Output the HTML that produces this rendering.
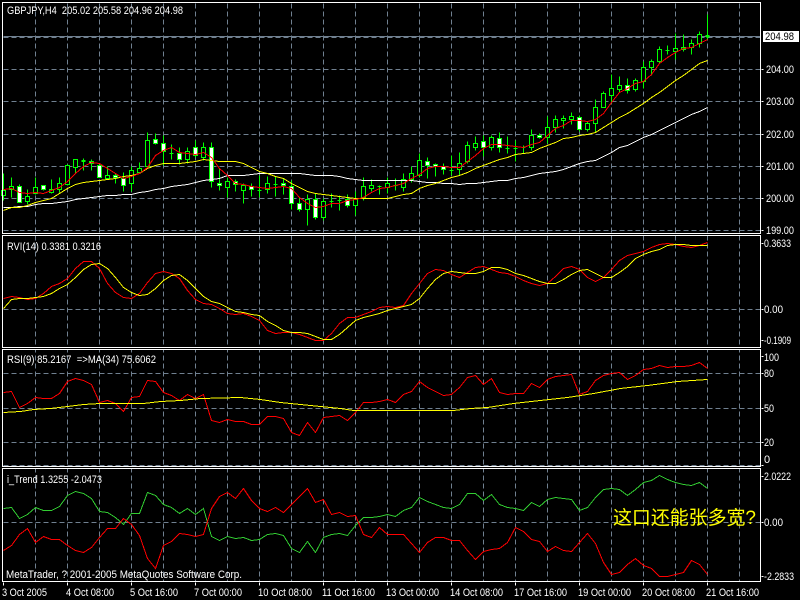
<!DOCTYPE html>
<html>
<head>
<meta charset="utf-8">
<style>
html,body{margin:0;padding:0;background:#000;width:800px;height:600px;overflow:hidden}
svg{display:block}
text{font-family:"Liberation Sans",sans-serif;font-size:11px;fill:#fff;white-space:pre}
.l{fill:none;stroke-width:1;shape-rendering:crispEdges}
</style>
</head>
<body>
<svg width="800" height="600" viewBox="0 0 800 600" xmlns="http://www.w3.org/2000/svg">
<rect width="800" height="600" fill="#000"/>
<g transform="translate(.5 .5)">
<!-- grid -->
<path class="l" stroke="#708090" stroke-dasharray="5 3" d="M35 3V581M67 3V581M99 3V581M131 3V581M163 3V581M195 3V581M227 3V581M259 3V581M291 3V581M323 3V581M355 3V581M387 3V581M419 3V581M451 3V581M483 3V581M515 3V581M547 3V581M579 3V581M611 3V581M643 3V581M675 3V581M707 3V581M739 3V581"/>
<path class="l" stroke="#000" d="M3 234H760M3 348H760M3 467H760"/>
<path class="l" stroke="#708090" stroke-dasharray="5 3" d="M3 37H760M3 69H760M3 101H760M3 134H760M3 166H760M3 198H760M3 230H760M3 309H760M3 373H760M3 408H760M3 442H760M3 465H760M3 522H760"/>
<path class="l" stroke="#708090" d="M3 36H760"/>

<!-- wicks -->
<path class="l" stroke="#0f0" d="M3 173V200M11 177V197M19 184V202M27 189V204M35 177V194M43 185V190M51 179V193M59 177V192M67 164V185M75 159V173M83 158V170M91 159V170M99 163V177M107 166V179M115 173V183M123 172V191M131 166V191M139 162V173M147 132V167M155 133V144M163 135V165M171 144V159M179 147V164M187 147V163M195 140V157M203 142V160M211 142V187M219 168V190M227 177V197M235 179V191M243 183V203M251 183V196M259 175V197M267 176V193M275 176V196M283 178V194M291 180V209M299 197V211M307 194V225M315 193V219M323 198V220M331 193V207M339 195V210M347 194V207M355 191V215M363 177V200M371 179V191M379 185V194M387 177V193M395 178V190M403 173V191M411 166V182M419 153V177M427 157V178M435 163V176M443 163V174M451 155V175M459 152V175M467 141V163M475 136V150M483 135V156M491 135V150M499 132V152M507 136V153M515 140V161M523 145V153M531 129V150M539 133V138M547 116V143M555 115V132M563 115V128M571 112V124M579 115V131M587 121V131M595 99V132M603 91V107M611 74V103M619 76V92M627 78V93M635 78V91M643 61V88M651 59V75M659 46V63M667 45V54M675 33V59M683 34V51M691 39V54M699 31V47M707 14V39"/>
<!-- doji bars -->
<path class="l" stroke="#0f0" d="M81 160H85M81 161H85M169 153H173M257 190H261M273 184H277M329 201H333M337 200H341M377 186H381M393 185H397M449 170H453M505 148H509M513 148H517M521 147H525M665 50H669M705 35H709M705 36H709M706 37H708"/>
<!-- bullish bodies -->
<path class="l" stroke="#0f0" fill="#000" style="fill:#000" d="M1 190h4v5h-4zM9 186h4v3h-4zM25 196h4v5h-4zM33 187h4v6h-4zM49 189h4v3h-4zM57 183h4v6h-4zM65 165h4v19h-4zM73 159h4v8h-4zM105 175h4v3h-4zM129 170h4v13h-4zM137 168h4v4h-4zM145 140h4v26h-4zM185 151h4v8h-4zM201 147h4v10h-4zM225 181h4v6h-4zM241 185h4v5h-4zM265 183h4v6h-4zM305 199h4v10h-4zM321 201h4v16h-4zM353 199h4v6h-4zM361 186h4v11h-4zM369 185h4v3h-4zM385 183h4v4h-4zM401 179h4v8h-4zM409 173h4v6h-4zM417 160h4v15h-4zM457 163h4v6h-4zM465 145h4v16h-4zM473 143h4v4h-4zM489 137h4v10h-4zM529 135h4v12h-4zM545 127h4v10h-4zM553 119h4v8h-4zM561 118h4v2h-4zM569 116h4v3h-4zM585 123h4v6h-4zM593 107h4v16h-4zM601 93h4v14h-4zM609 88h4v7h-4zM617 85h4v4h-4zM633 80h4v9h-4zM641 67h4v14h-4zM649 61h4v6h-4zM657 49h4v12h-4zM673 48h4v3h-4zM681 47h4v2h-4zM689 43h4v4h-4zM697 34h4v9h-4z"/>
<!-- bearish bodies -->
<path class="l" stroke="#0f0" fill="#fff" style="fill:#fff" d="M17 186h4v16h-4zM41 185h4v4h-4zM89 161h4v2h-4zM97 165h4v12h-4zM113 175h4v2h-4zM121 178h4v7h-4zM153 139h4v4h-4zM161 143h4v8h-4zM177 153h4v6h-4zM193 147h4v8h-4zM209 147h4v34h-4zM217 183h4v2h-4zM233 181h4v3h-4zM249 186h4v3h-4zM281 183h4v2h-4zM289 186h4v17h-4zM297 203h4v6h-4zM313 199h4v18h-4zM345 199h4v6h-4zM425 161h4v4h-4zM433 164h4v2h-4zM441 166h4v3h-4zM481 141h4v6h-4zM497 138h4v9h-4zM537 135h4v2h-4zM577 117h4v12h-4zM625 85h4v5h-4z"/>

<!-- main chart MAs -->
<polyline class="l" stroke="#fff" points="3,207 11,207 19,206 27,206 35,204 43,203 51,203 59,202 67,201 75,199 83,198 91,197 99,196 107,195 115,195 123,194 131,194 139,192 147,191 155,189 163,188 171,186 179,185 187,184 195,182 203,180 211,179 219,178 227,175 235,175 243,175 251,174 259,173 267,173 275,173 283,173 291,173 299,173 307,174 315,175 323,175 331,175 339,176 347,178 355,179 363,180 371,180 379,180 387,180 395,180 403,180 411,180 419,181 427,182 435,182 443,183 451,183 459,184 467,183 475,183 483,182 491,181 499,180 507,180 515,178 523,177 531,175 539,173 547,172 555,171 563,169 571,166 579,163 587,161 595,160 603,156 611,152 619,147 627,145 635,141 643,137 651,134 659,130 667,126 675,122 683,118 691,114 699,111 707,107"/>
<polyline class="l" stroke="#ff0" points="3,210 11,207 19,207 27,205 35,202 43,200 51,198 59,193 67,188 75,184 83,182 91,181 99,180 107,179 115,178 123,176 131,175 139,173 147,168 155,165 163,163 171,163 179,163 187,162 195,161 203,159 211,160 219,161 227,161 235,161 243,163 251,167 259,171 267,173 275,176 283,178 291,183 299,187 307,191 315,193 323,194 331,195 339,196 347,197 355,198 363,198 371,198 379,198 387,198 395,196 403,194 411,193 419,188 427,185 435,183 443,180 451,177 459,175 467,172 475,168 483,165 491,162 499,159 507,157 515,154 523,153 531,152 539,148 547,145 555,142 563,138 571,137 579,135 587,134 595,132 603,127 611,122 619,117 627,113 635,108 643,103 651,97 659,92 667,86 675,80 683,75 691,69 699,63 707,60"/>
<polyline class="l" stroke="#f00" points="3,189 11,188 19,192 27,193 35,192 43,193 51,190 59,187 67,181 75,173 83,166 91,162 99,163 107,168 115,173 123,178 131,176 139,173 147,167 155,155 163,150 171,147 179,152 187,153 195,154 203,152 211,157 219,168 227,175 235,183 243,184 251,186 259,187 267,188 275,187 283,186 291,188 299,197 307,203 315,207 323,206 331,203 339,203 347,200 355,199 363,197 371,192 379,188 387,187 395,185 403,183 411,178 419,174 427,168 435,166 443,166 451,167 459,167 467,161 475,155 483,148 491,144 499,144 507,145 515,146 523,147 531,144 539,142 547,135 555,128 563,125 571,120 579,120 587,121 595,119 603,113 611,102 619,92 627,88 635,83 643,81 651,74 659,63 667,57 675,52 683,48 691,47 699,43 707,39"/>

<!-- RVI -->
<polyline class="l" stroke="#f00" points="3,298 11,296 19,297 27,299 35,298 43,293 51,286 59,283 67,278 75,268 83,261 91,261 99,268 107,283 115,292 123,297 131,298 139,293 147,282 155,273 163,271 171,273 179,278 187,290 195,299 203,303 211,304 219,308 227,313 235,314 243,313 251,316 259,320 267,330 275,333 283,332 291,332 299,334 307,337 315,340 323,340 331,333 339,323 347,317 355,317 363,314 371,311 379,307 387,306 395,307 403,305 411,293 419,283 427,273 435,269 443,270 451,274 459,277 467,272 475,267 483,266 491,269 499,272 507,273 515,276 523,280 531,283 539,285 547,283 555,276 563,268 571,266 579,269 587,277 595,281 603,277 611,269 619,260 627,255 635,253 643,251 651,247 659,244 667,243 675,244 683,246 691,247 699,245 707,242"/>
<polyline class="l" stroke="#ff0" points="3,308 11,299 19,298 27,298 35,297 43,296 51,293 59,288 67,284 75,277 83,269 91,264 99,263 107,268 115,277 123,287 131,292 139,295 147,294 155,288 163,280 171,275 179,274 187,280 195,288 203,296 211,301 219,303 227,307 235,311 243,312 251,314 259,315 267,321 275,325 283,330 291,332 299,332 307,333 315,336 323,339 331,339 339,334 347,327 355,320 363,317 371,315 379,313 387,310 395,308 403,306 411,304 419,298 427,288 435,279 443,273 451,271 459,272 467,273 475,273 483,271 491,267 499,267 507,269 515,273 523,275 531,278 539,281 547,283 555,283 563,279 571,274 579,270 587,269 595,273 603,277 611,277 619,272 627,266 635,258 643,254 651,251 659,249 667,245 675,244 683,244 691,245 699,245 707,245"/>

<!-- RSI -->
<polyline class="l" stroke="#f00" points="3,392 11,391 19,407 27,403 35,397 43,398 51,398 59,393 67,381 75,378 83,380 91,384 99,402 107,400 115,403 123,411 131,397 139,396 147,380 155,381 163,392 171,395 179,400 187,394 195,398 203,394 211,420 219,422 227,419 235,421 243,421 251,424 259,424 267,416 275,416 283,418 291,432 299,435 307,422 315,432 323,417 331,416 339,415 347,420 355,412 363,402 371,402 379,401 387,399 395,402 403,394 411,391 419,381 427,387 435,391 443,395 451,394 459,387 467,377 475,375 483,384 491,378 499,392 507,394 515,393 523,393 531,383 539,387 547,379 555,376 563,375 571,374 579,394 587,391 595,380 603,375 611,373 619,372 627,379 635,375 643,369 651,368 659,365 667,367 675,366 683,366 691,365 699,362 707,368"/>
<polyline class="l" stroke="#ff0" points="3,412 20,411 33,409 50,408 67,406 83,404 100,403 143,403 160,401 180,400 200,398 240,397 260,399 280,402 300,404 320,406 340,408 353,410 453,410 470,408 487,407 513,403 540,400 567,397 593,393 620,388 647,385 677,381 707,379"/>

<!-- i_Trend -->
<polyline class="l" stroke="#32cd32" points="3,508 11,507 19,518 27,514 35,507 43,510 51,510 59,506 67,495 75,491 83,493 91,498 99,511 107,512 115,517 123,524 131,513 139,513 147,492 155,495 163,504 171,507 179,513 187,508 195,514 203,508 211,536 219,540 227,536 235,538 243,537 251,540 259,539 267,534 275,533 283,535 291,548 299,552 307,541 315,552 323,537 331,534 339,533 347,535 355,525 363,517 371,517 379,516 387,514 395,516 403,510 411,507 419,497 427,501 435,504 443,507 451,508 459,504 467,493 475,493 483,500 491,494 499,504 507,507 515,508 523,510 531,502 539,506 547,499 555,497 563,498 571,499 579,510 587,507 595,497 603,489 611,488 619,489 627,495 635,489 643,482 651,480 659,475 667,479 675,482 683,484 691,485 699,482 707,488"/>
<polyline class="l" stroke="#f00" points="3,550 11,545 19,534 27,528 35,542 43,536 51,539 59,539 67,545 75,550 83,552 91,547 99,537 107,528 115,528 123,518 131,524 139,535 147,558 155,568 163,545 171,541 179,533 187,534 195,536 203,534 211,508 219,496 227,492 235,498 243,488 251,500 259,508 267,511 275,507 283,512 291,504 299,496 307,488 315,502 323,499 331,514 339,512 347,516 355,515 363,534 371,537 379,527 387,534 395,534 403,534 411,543 419,552 427,542 435,537 443,537 451,540 459,540 467,550 475,559 483,551 491,549 499,548 507,542 515,527 523,531 531,539 539,541 547,551 555,546 563,550 571,551 579,542 587,533 595,543 603,562 611,574 619,572 627,564 635,558 643,565 651,568 659,576 667,576 675,574 683,572 691,560 699,564 707,574"/>

<!-- frames -->
<path class="l" stroke="#fff" d="M2 2H760V233H2ZM2 235H760V347H2ZM2 349H760V466H2ZM2 468H760V581H2Z"/>
<!-- axis ticks -->
<path class="l" stroke="#fff" d="M761 69H763M761 101H763M761 134H763M761 166H763M761 198H763M761 230H763M761 243H763M761 309H763M761 340H763M761 356H763M761 373H763M761 408H763M761 442H763M761 465H763M761 476H763M761 522H763M761 576H763"/>
<path class="l" stroke="#fff" d="M3 582V585M67 582V585M131 582V585M195 582V585M259 582V585M323 582V585M387 582V585M451 582V585M515 582V585M579 582V585M643 582V585M707 582V585"/>
</g>

<rect x="763" y="31" width="36" height="11" fill="#fff"/>

<!-- titles -->
<text x="7" y="14" textLength="176" lengthAdjust="spacingAndGlyphs">GBPJPY,H4  205.02 205.58 204.96 204.98</text>
<text x="7" y="250" textLength="94" lengthAdjust="spacingAndGlyphs">RVI(14) 0.3381 0.3216</text>
<text x="7" y="363" textLength="149" lengthAdjust="spacingAndGlyphs">RSI(9) 85.2167  =&gt;MA(34) 75.6062</text>
<text x="7" y="483" textLength="95" lengthAdjust="spacingAndGlyphs">i_Trend 1.3255 -2.0473</text>
<text x="6" y="578" textLength="236" lengthAdjust="spacingAndGlyphs">MetaTrader, ? 2001-2005 MetaQuotes Software Corp.</text>

<!-- right axis -->
<text x="765" y="40" textLength="29" lengthAdjust="spacingAndGlyphs" style="fill:#000">204.98</text>
<text x="766" y="73" textLength="28" lengthAdjust="spacingAndGlyphs">204.00</text>
<text x="766" y="105" textLength="28" lengthAdjust="spacingAndGlyphs">203.00</text>
<text x="766" y="138" textLength="28" lengthAdjust="spacingAndGlyphs">202.00</text>
<text x="766" y="170" textLength="28" lengthAdjust="spacingAndGlyphs">201.00</text>
<text x="766" y="202" textLength="28" lengthAdjust="spacingAndGlyphs">200.00</text>
<text x="766" y="234" textLength="28" lengthAdjust="spacingAndGlyphs">199.00</text>
<text x="764" y="247" textLength="27" lengthAdjust="spacingAndGlyphs">0.3633</text>
<text x="764" y="313" textLength="19" lengthAdjust="spacingAndGlyphs">0.00</text>
<text x="764" y="344" textLength="27" lengthAdjust="spacingAndGlyphs">-0.1909</text>
<text x="764" y="361" textLength="15" lengthAdjust="spacingAndGlyphs">100</text>
<text x="764" y="377" textLength="10" lengthAdjust="spacingAndGlyphs">80</text>
<text x="764" y="412" textLength="10" lengthAdjust="spacingAndGlyphs">50</text>
<text x="764" y="446" textLength="10" lengthAdjust="spacingAndGlyphs">20</text>
<text x="764" y="463">0</text>
<text x="764" y="480" textLength="27" lengthAdjust="spacingAndGlyphs">2.0222</text>
<text x="764" y="526" textLength="19" lengthAdjust="spacingAndGlyphs">0.00</text>
<text x="764" y="580" textLength="30" lengthAdjust="spacingAndGlyphs">-2.2833</text>

<!-- bottom axis -->
<text x="2" y="596" textLength="45" lengthAdjust="spacingAndGlyphs">3 Oct 2005</text>
<text x="66" y="596" textLength="48" lengthAdjust="spacingAndGlyphs">4 Oct 08:00</text>
<text x="130" y="596" textLength="48" lengthAdjust="spacingAndGlyphs">5 Oct 16:00</text>
<text x="194" y="596" textLength="48" lengthAdjust="spacingAndGlyphs">7 Oct 00:00</text>
<text x="258" y="596" textLength="54" lengthAdjust="spacingAndGlyphs">10 Oct 08:00</text>
<text x="322" y="596" textLength="53" lengthAdjust="spacingAndGlyphs">11 Oct 16:00</text>
<text x="386" y="596" textLength="53" lengthAdjust="spacingAndGlyphs">13 Oct 00:00</text>
<text x="450" y="596" textLength="53" lengthAdjust="spacingAndGlyphs">14 Oct 08:00</text>
<text x="514" y="596" textLength="53" lengthAdjust="spacingAndGlyphs">17 Oct 16:00</text>
<text x="578" y="596" textLength="53" lengthAdjust="spacingAndGlyphs">19 Oct 00:00</text>
<text x="642" y="596" textLength="53" lengthAdjust="spacingAndGlyphs">20 Oct 08:00</text>
<text x="706" y="596" textLength="53" lengthAdjust="spacingAndGlyphs">21 Oct 16:00</text>

<text x="613" y="524" textLength="143" lengthAdjust="spacing" style="font-family:'Liberation Sans','WenQuanYi Zen Hei','Noto Sans CJK SC',sans-serif;font-size:19px;fill:#ff0">这口还能张多宽?</text>
</svg>
</body>
</html>
